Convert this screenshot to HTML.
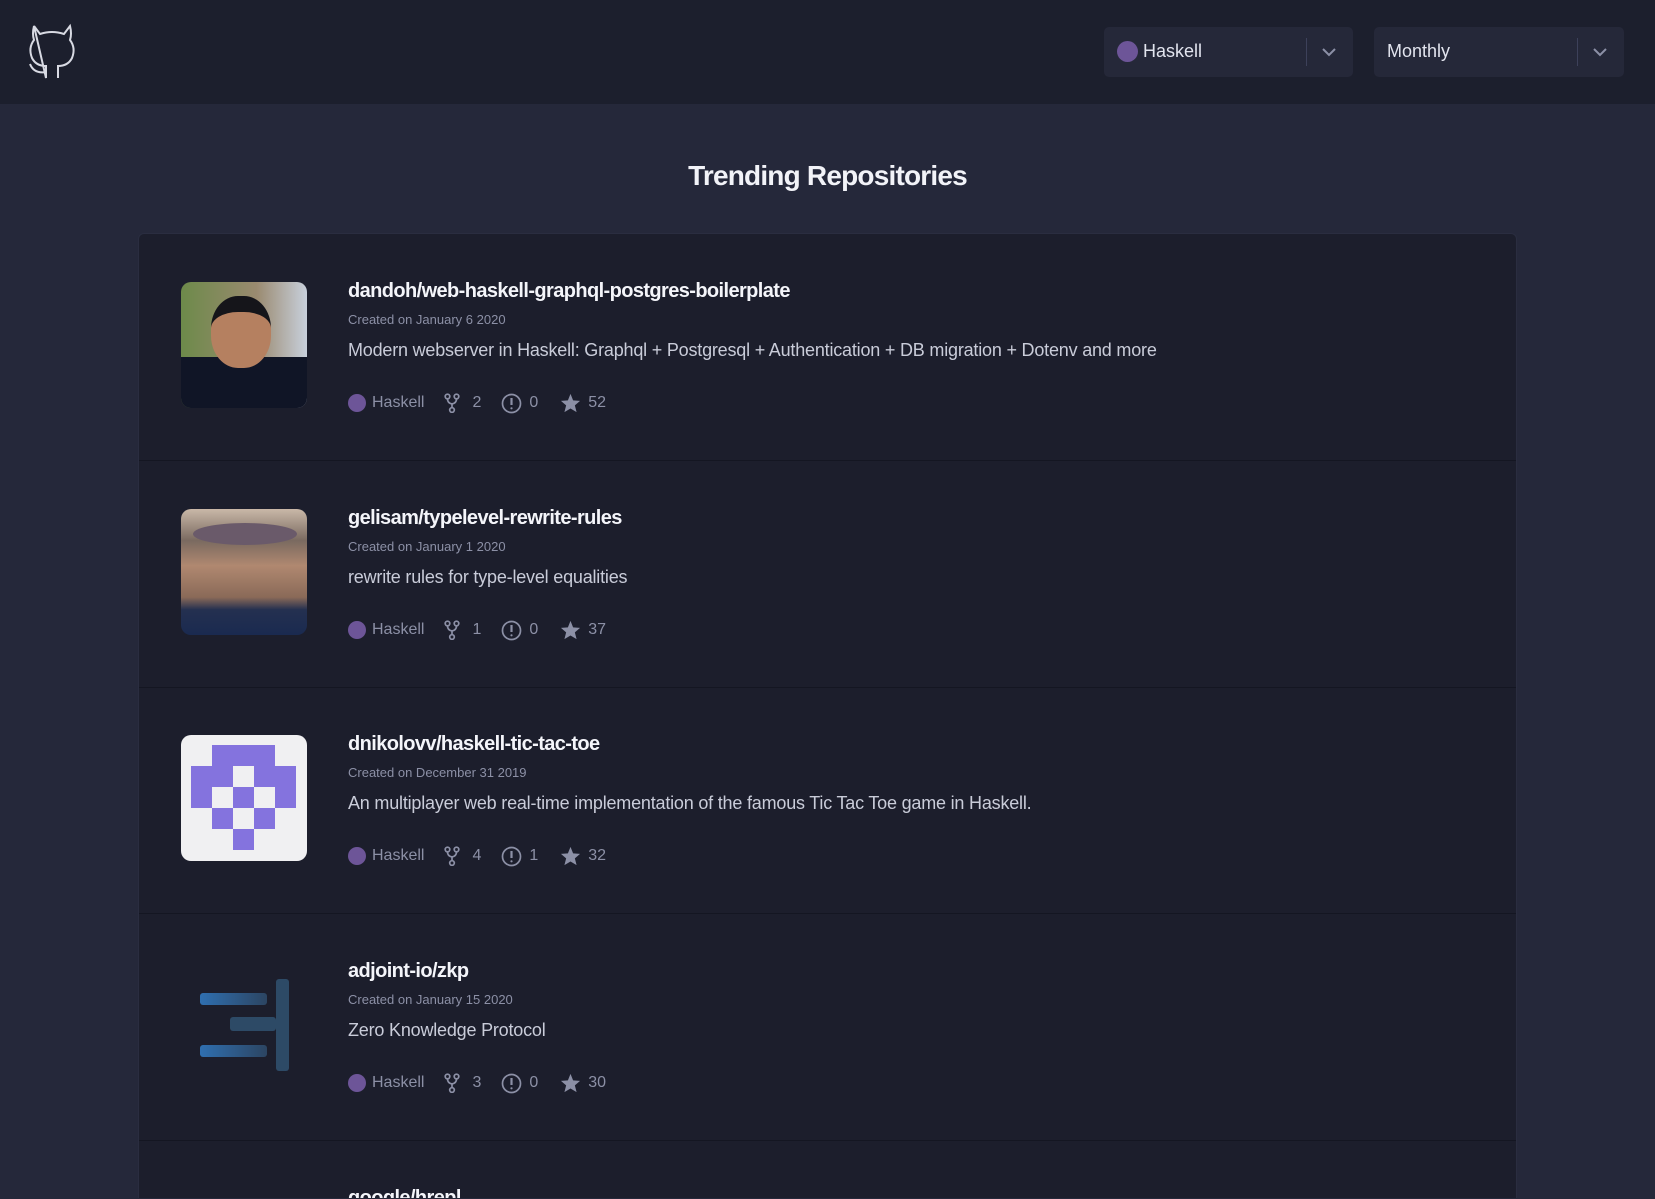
<!DOCTYPE html>
<html style="width:1655px;height:1199px;overflow:hidden"><head><meta charset="utf-8"><style>
*{box-sizing:border-box;margin:0;padding:0}
body{width:1655px;height:1199px;overflow:hidden;background:#25283a;font-family:"Liberation Sans",sans-serif;position:relative}
.hdr{position:absolute;left:0;top:0;width:1655px;height:104px;background:#1c1f2d}
.sel{position:absolute;top:27px;height:50px;background:#252839;border-radius:5px;color:#e2e4ee;font-size:18px}
.sel .t{position:absolute;top:14px}
.sel .sep{position:absolute;top:11px;width:1px;height:28px;background:#3d415a}
.dot{display:inline-block;border-radius:50%;background:#6d5598}
h1{position:absolute;top:160px;left:0;width:1655px;text-align:center;color:#f2f3f8;font-size:28px;font-weight:bold;letter-spacing:-0.8px}
.card{position:absolute;left:138px;top:233px;width:1379px;height:965px;background:#1c1e2c;border-radius:6px 6px 0 0;border:1px solid #2a2d40;border-bottom:none;overflow:hidden}
.row{position:absolute;left:0;width:1379px;height:227px;border-bottom:1px solid #141622}
.av{position:absolute;left:42px;top:48px;width:126px;height:126px;border-radius:10px;overflow:hidden}
.ti{position:absolute;left:209px;top:46px;color:#f4f5fa;font-size:20px;font-weight:bold;letter-spacing:-0.6px}
.da{position:absolute;left:209px;top:78px;color:#8c90a6;font-size:13px}
.de{position:absolute;left:209px;top:106px;color:#c9ccd9;font-size:18px;letter-spacing:-0.2px}
.me{position:absolute;left:209px;top:159px;color:#8c90a6;font-size:16px;display:flex;align-items:center;height:20px}
.me svg{display:block}
</style></head><body>
<div class="hdr">
<svg style="position:absolute;left:24px;top:20px" width="56" height="60" viewBox="0 0 56 60" fill="none" stroke="#d8dae3" stroke-width="2">
<path d="M10 6 L16 14 Q28 10 40 14 L46 6 Q48 14 46 20 Q52 28 48 38 Q44 46 34 46 L34 58 M22 58 L22 46 Q12 46 8 38 Q4 28 10 20 Q8 14 10 6 Z M22 52 Q10 54 6 44"/>
</svg>
<div class="sel" style="left:1104px;width:249px"><span class="dot" style="position:absolute;left:13px;top:14px;width:21px;height:21px"></span><span class="t" style="left:39px">Haskell</span><span class="sep" style="left:202px"></span>
<svg style="position:absolute;left:217px;top:20px" width="16" height="10"><path d="M2 2 L8 8 L14 2" stroke="#8c90a6" stroke-width="2" fill="none"/></svg></div>
<div class="sel" style="left:1374px;width:250px"><span class="t" style="left:13px">Monthly</span><span class="sep" style="left:203px"></span>
<svg style="position:absolute;left:218px;top:20px" width="16" height="10"><path d="M2 2 L8 8 L14 2" stroke="#8c90a6" stroke-width="2" fill="none"/></svg></div>
</div>
<h1>Trending Repositories</h1>
<div class="card">
<div class="row" style="top:0">
<div class="av" style="background:linear-gradient(90deg,#6d8a4a,#9a8a70 60%,#c8d0dc)"><div style="position:absolute;left:0;top:75px;width:126px;height:51px;background:#101526"></div><div style="position:absolute;left:30px;top:14px;width:60px;height:72px;border-radius:45%;background:#b58060;border-top:16px solid #15151a"></div></div>
<div class="ti">dandoh/web-haskell-graphql-postgres-boilerplate</div>
<div class="da">Created on January 6 2020</div>
<div class="de">Modern webserver in Haskell: Graphql + Postgresql + Authentication + DB migration + Dotenv and more</div>
<div class="me"></div>
</div>
<div class="row" style="top:227px">
<div class="av" style="background:linear-gradient(180deg,#c9b8a8 0,#7a6a60 25%,#b08870 45%,#8a6a58 70%,#243050 80%,#1a2a50)"><div style="position:absolute;left:12px;top:14px;width:104px;height:22px;border-radius:50%;background:#6a5a6a"></div></div>
<div class="ti">gelisam/typelevel-rewrite-rules</div>
<div class="da">Created on January 1 2020</div>
<div class="de">rewrite rules for type-level equalities</div>
<div class="me"></div>
</div>
<div class="row" style="top:453px">
<div class="av" style="background:#f0f0f2">
<svg width="126" height="126" style="position:absolute;left:0;top:0"><g fill="#8473de">
<rect x="31" y="10" width="63" height="21"/>
<rect x="10" y="31" width="42" height="21"/><rect x="73" y="31" width="42" height="21"/>
<rect x="10" y="52" width="21" height="21"/><rect x="52" y="52" width="21" height="21"/><rect x="94" y="52" width="21" height="21"/>
<rect x="31" y="73" width="21" height="21"/><rect x="73" y="73" width="21" height="21"/>
<rect x="52" y="94" width="21" height="21"/></g></svg></div>
<div class="ti">dnikolovv/haskell-tic-tac-toe</div>
<div class="da">Created on December 31 2019</div>
<div class="de">An multiplayer web real-time implementation of the famous Tic Tac Toe game in Haskell.</div>
<div class="me"></div>
</div>
<div class="row" style="top:680px">
<div class="av">
<svg width="126" height="126"><defs><linearGradient id="g" x1="0" x2="1"><stop offset="0" stop-color="#2f6fb0"/><stop offset="1" stop-color="#2c4562"/></linearGradient></defs>
<rect x="19" y="31" width="67" height="12" rx="3" fill="url(#g)"/>
<rect x="19" y="83" width="67" height="12" rx="3" fill="url(#g)"/>
<rect x="49" y="55" width="46" height="14" rx="3" fill="#2d4a66"/>
<rect x="95" y="17" width="13" height="92" rx="3" fill="#2d4a66"/></svg></div>
<div class="ti">adjoint-io/zkp</div>
<div class="da">Created on January 15 2020</div>
<div class="de">Zero Knowledge Protocol</div>
<div class="me"></div>
</div>
<div class="row" style="top:907px;height:58px;border:none">
<div class="ti">google/hrepl</div>
</div>
</div>
<script>
var data=[[2,0,52],[1,0,37],[4,1,32],[3,0,30]];
var ms=document.querySelectorAll('.me');
data.forEach(function(d,i){
ms[i].innerHTML='<span class="dot" style="width:18px;height:18px;margin-right:6px"></span>Haskell'+
'<svg style="margin-left:20px" width="16" height="20" viewBox="0 0 16 20" fill="none" stroke="#8c90a6" stroke-width="1.7"><circle cx="3.5" cy="3.5" r="2.3"/><circle cx="12.5" cy="3.5" r="2.3"/><circle cx="8" cy="17" r="2.3"/><path d="M3.5 6 Q3.5 10 8 11 Q12.5 10 12.5 6 M8 11 V14.6"/></svg>'+
'<span style="margin-left:12px">'+d[0]+'</span>'+
'<svg style="margin-left:20px" width="21" height="21" viewBox="0 0 21 21" fill="none" stroke="#8c90a6" stroke-width="1.7"><circle cx="10.5" cy="10.5" r="9"/><path d="M10.5 5 V12" stroke-width="2.2"/><circle cx="10.5" cy="15.3" r="1.1" fill="#8c90a6" stroke="none"/></svg>'+
'<span style="margin-left:7px">'+d[1]+'</span>'+
'<svg style="margin-left:22px" width="21" height="20" viewBox="0 0 24 23"><path d="M12 1 L15 8.5 L23 9 L17 14.2 L19 22 L12 17.8 L5 22 L7 14.2 L1 9 L9 8.5 Z" fill="#8c90a6"/></svg>'+
'<span style="margin-left:7px">'+d[2]+'</span>';
});
</script>
</body></html>
